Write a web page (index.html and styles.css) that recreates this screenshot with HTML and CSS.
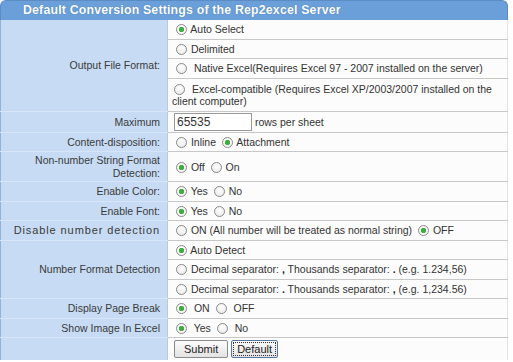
FILE: index.html
```html
<!DOCTYPE html>
<html lang="en">
<head>
    <meta charset="UTF-8">
    <title>Rep2excel Server Settings</title>
    <link rel="stylesheet" href="styles.css">
</head>
<body>
    <div class="panel">
        <div class="panel-title">Default Conversion Settings of the Rep2excel Server</div>
        <form id="settingsForm">
            <table class="settings">
                <colgroup>
                    <col class="label-col">
                    <col>
                </colgroup>
                <tr>
                    <td class="label" rowspan="4">Output File Format:</td>
                    <td class="value"><label><input type="radio" name="format" checked> Auto Select</label></td>
                </tr>
                <tr><td class="value"><label><input type="radio" name="format"> Delimited</label></td></tr>
                <tr><td class="value"><label class="sp"><input type="radio" name="format"> Native Excel(Requires Excel 97 - 2007 installed on the server)</label></td></tr>
                <tr><td class="value tall"><label class="sp"><input type="radio" name="format"> Excel-compatible (Requires Excel XP/2003/2007 installed on the client computer)</label></td></tr>
                <tr>
                    <td class="label">Maximum</td>
                    <td class="value max"><input type="text" class="rows" value="65535"> rows per sheet</td>
                </tr>
                <tr>
                    <td class="label">Content-disposition:</td>
                    <td class="value"><label><input type="radio" name="disp"> Inline</label> <label><input type="radio" name="disp" checked> Attachment</label></td>
                </tr>
                <tr>
                    <td class="label tall">Non-number String Format Detection:</td>
                    <td class="value"><label><input type="radio" name="nns" checked> Off</label> <label><input type="radio" name="nns"> On</label></td>
                </tr>
                <tr>
                    <td class="label">Enable Color:</td>
                    <td class="value"><label><input type="radio" name="color" checked> Yes</label> <label><input type="radio" name="color"> No</label></td>
                </tr>
                <tr>
                    <td class="label">Enable Font:</td>
                    <td class="value"><label><input type="radio" name="font" checked> Yes</label> <label><input type="radio" name="font"> No</label></td>
                </tr>
                <tr>
                    <td class="label wide">Disable number detection</td>
                    <td class="value"><label><input type="radio" name="dnd"> ON (All number will be treated as normal string)</label> <label><input type="radio" name="dnd" checked> OFF</label></td>
                </tr>
                <tr>
                    <td class="label" rowspan="3">Number Format Detection</td>
                    <td class="value"><label><input type="radio" name="nfd" checked> Auto Detect</label></td>
                </tr>
                <tr><td class="value"><label><input type="radio" name="nfd"> Decimal separator: <b>,</b> Thousands separator: <b>.</b> (e.g. 1.234,56)</label></td></tr>
                <tr><td class="value"><label><input type="radio" name="nfd"> Decimal separator: <b>.</b> Thousands separator: <b>,</b> (e.g. 1,234.56)</label></td></tr>
                <tr>
                    <td class="label">Display Page Break</td>
                    <td class="value"><label class="sp"><input type="radio" name="pb" checked> ON</label> <label class="sp"><input type="radio" name="pb"> OFF</label></td>
                </tr>
                <tr>
                    <td class="label">Show Image In Excel</td>
                    <td class="value"><label class="sp"><input type="radio" name="img" checked> Yes</label> <label class="sp"><input type="radio" name="img"> No</label></td>
                </tr>
                <tr>
                    <td class="label blank"></td>
                    <td class="value buttons">
                        <button type="submit">Submit</button>
                        <button type="button" class="focused">Default</button>
                    </td>
                </tr>
            </table>
        </form>
    </div>
</body>
</html>
```

FILE: styles.css
```css
body {
  margin: 0;
  background: #fff;
  font-family: "Liberation Sans", Arial, sans-serif;
  font-size: 10.5px;
  color: #333;
}

.panel {
  width: 508px;
}

.panel-title {
  height: 19px;
  line-height: 19px;
  padding-left: 22px;
  background: #6a9fd9;
  border: 1px solid #5b8cc4;
  border-bottom: none;
  border-radius: 6px 6px 0 0;
  color: #fff;
  font-weight: bold;
  font-size: 12.3px;
  letter-spacing: 0.2px;
  text-shadow: 0 0 1px #3d6ea8;
}

.settings {
  width: 100%;
  table-layout: fixed;
  border-collapse: collapse;
  border-left: 1px solid #8fb3dc;
  border-right: 1px solid #e4e4e4;
}

.label-col {
  width: 167px;
}

.settings td {
  padding: 0;
  height: 18.5px;
}

.label {
  padding-right: 7px !important;
  text-align: right;
  background: #c7dcf4;
  border-bottom: 1px solid #d6e6f8;
  border-right: 1px solid #b9c9dc;
  color: #3a3a3a;
}

.label.tall {
  line-height: 13px;
  padding-left: 10px !important;
  height: 29px;
}

.label.wide {
  font-size: 11px;
  letter-spacing: 0.9px;
}

.value {
  padding-left: 6px !important;
  background: #fcfcfc;
  border-bottom: 1px solid #c8c8c8;
}

.value.tall {
  line-height: 12px;
  height: 30px;
  padding: 1px 0 1px 4px !important;
}

.value.max {
  height: 20px;
}

.value label {
  margin-right: 1px;
}

.value label.sp input {
  margin-right: 4px;
}

.value input[type="radio"] {
  -webkit-appearance: none;
  appearance: none;
  width: 11px;
  height: 11px;
  margin: 0 1px 0 2px;
  vertical-align: -2px;
  border: 1px solid #8a8a8a;
  border-radius: 50%;
  background: radial-gradient(circle at 50% 35%, #fff, #e6e6e6);
}

.value input[type="radio"]:checked {
  background: radial-gradient(circle, #3fae3f 0, #3fae3f 2.5px, #fff 3px, #e9e9e9 100%);
}

.value b {
  font-weight: bold;
  color: #222;
}

.rows {
  width: 72px;
  height: 16px;
  padding: 0 2px;
  margin: 1px 0;
  border: 1px solid #9a9a9a;
  font-family: "Liberation Sans", Arial, sans-serif;
  font-size: 12px;
  color: #333;
}

.buttons {
  height: 22px !important;
  border-bottom: none !important;
}

.label.blank {
  border-bottom: none;
}

.buttons button {
  height: 18px;
  padding: 0 9px;
  font-family: "Liberation Sans", Arial, sans-serif;
  font-size: 11px;
  color: #222;
  background: linear-gradient(#fbfbfb, #e3e3e3);
  border: 1px solid #8a8a8a;
  border-radius: 2px;
}

.buttons button.focused {
  padding: 0 5px;
  border-color: #5676a8;
  outline: 1px dotted #333;
  outline-offset: -3px;
}
```
